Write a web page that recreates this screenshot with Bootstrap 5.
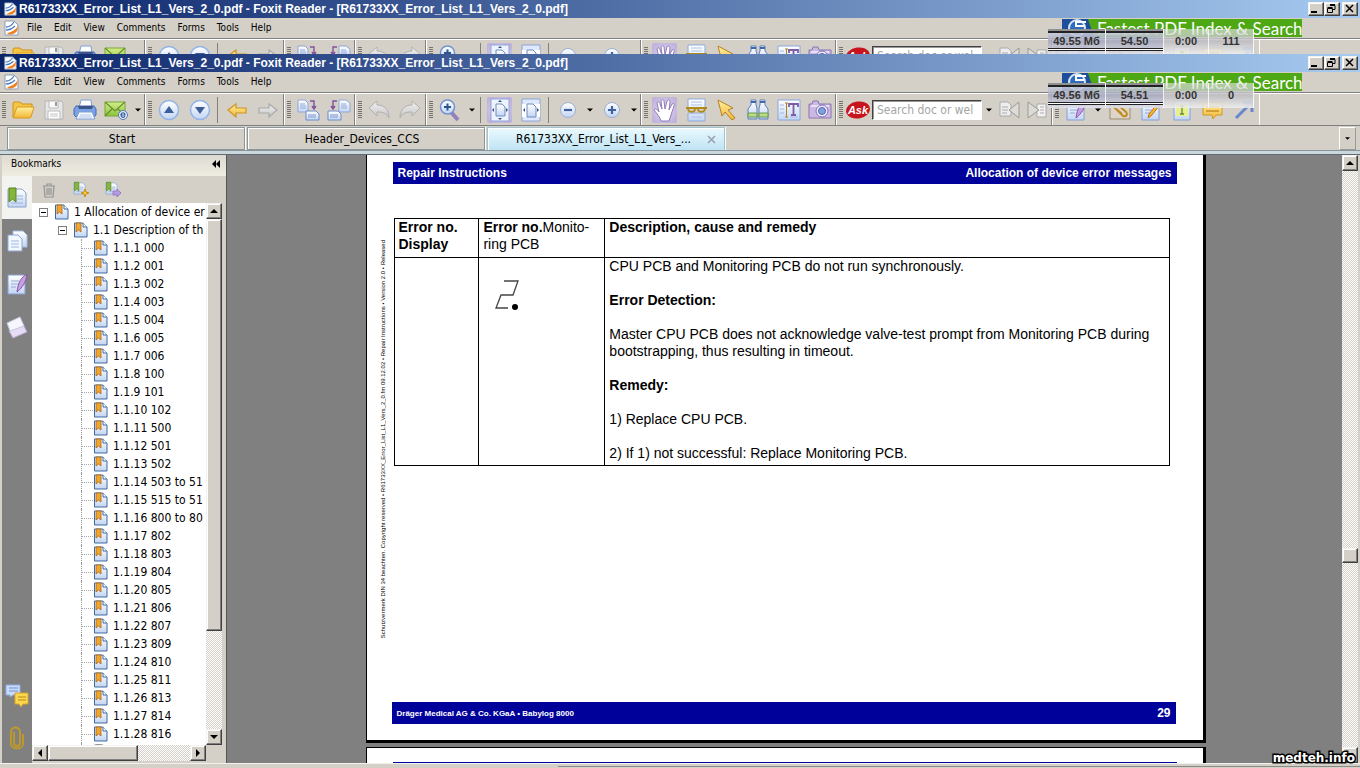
<!DOCTYPE html>
<html lang="en">
<head>
<meta charset="utf-8">
<meta name="viewport" content="width=device-width, initial-scale=1">
<title>R61733XX_Error_List_L1_Vers_2_0.pdf - Foxit Reader</title>
<link href="https://cdn.jsdelivr.net/npm/bootstrap@5.3.0/dist/css/bootstrap.min.css" rel="stylesheet">
<style>
:root{--face:#d4d0c8;--shade:#808080;--navy:#00009a}
body{font:12px/18px "DejaVu Sans Condensed",sans-serif;color:#000;background:var(--face)}
a,a:hover{color:#000;text-decoration:none}
button{font:inherit;color:#000;padding:0;border:0;background:none}
svg{display:block;flex:none}
.checker{background:repeating-conic-gradient(#fff 0 25%,var(--face) 0 50%) 0 0/2px 2px}
.bevel{background:var(--face);border:1px solid;border-color:#f4f2ee #404040 #404040 #f4f2ee;box-shadow:inset -1px -1px var(--shade),inset 1px 1px #fff}

/* window chrome */
.behind{height:54px}
.title-bar{height:18px;padding:0 2px 0 3px;background:linear-gradient(90deg,#0a246a,#a6caf0);color:#fff;font:bold 12px/18px "Liberation Sans",sans-serif}
.title-bar svg:first-child{margin-right:2px}
.win-btn{width:16px;height:14px}
.win-btn svg{margin:0}
.win-gap{margin-right:2px}
.menu-row{height:21px;padding:0 58px 0 3px;border-bottom:1px solid var(--shade);font-size:10px}
.promo{width:240px;height:18px;background:#4da814;color:#fff;font:17px/17px Lato,sans-serif}
.promo svg{margin-right:3px}
.tool-row{height:33px;border-top:1px solid #fff;border-bottom:1px solid var(--shade)}
.tool-group{border-right:1px solid var(--shade);box-shadow:1px 0 #fff;margin-right:1px}
.tool-group:last-child{border-right-color:#fff;box-shadow:none}
.grip{width:4px;height:18px;margin:0 1px 0 2px;background:repeating-linear-gradient(#77736c 0 1px,transparent 1px 2px)}
.tool{width:31px;height:28px}
.tool svg{width:24px;height:24px}
.tool.slim{width:28px}
.tool.on{background:radial-gradient(#e3d8f2,#b9abd8);width:25px;height:26px;margin:0 3px;border-radius:2px}
.drop{width:13px;height:28px}
.rule{width:1px;height:26px;margin:0 3px 0 2px;background:var(--shade)}
.ask-logo{margin:0 2px}
.ask-box{width:110px;height:20px;padding:0 4px;border:1px solid;border-color:#404040 #fff #fff #404040;box-shadow:inset 1px 1px #999;font:12px/18px "DejaVu Sans Condensed",sans-serif;background:#fff;border-radius:0}
.ask-box::placeholder{color:#a5a5a5;opacity:1}
.meter{top:29px;right:106px;height:25px;z-index:2;font:bold 11px/24px "Liberation Sans",sans-serif;color:#333}
.meter span{width:45px;text-align:center;background:linear-gradient(rgba(235,235,235,.6),rgba(190,190,195,.9),rgba(240,240,240,.85));border-right:1px solid rgba(255,255,255,.8)}
.meter .level{width:58px;background:linear-gradient(rgba(215,218,230,.9),rgba(165,168,190,.85),rgba(225,225,235,.9));box-shadow:inset 0 2px rgba(255,255,255,.5),inset 0 4px #222}
.meter .level::after{content:"";display:block;height:3px;margin:-5px 0 0;border:solid #222;border-width:1px 0;background:#fff}

/* document tabs */
.tab-row{height:24px;padding:1px 4px 0 7px}
.doc-tab{width:238px;height:23px;margin-right:2px;padding-right:8px;border:1px solid #8a9698;box-shadow:inset 1px 1px #fff,1px 0 #fff}
.doc-tab.live{background:linear-gradient(#eaf9fd,#bfe4f4);border-color:#9fc3d2;border-bottom:0}
.tab-menu{width:17px;border:1px solid;border-color:#fff #999 #999 #fff}
.tab-base{height:5px;border-top:1px solid #87959f;border-bottom:1px solid #5e6b76;background:#ccd7dc}

/* bookmarks panel */
.side{width:227px;border-right:1px solid #555;padding-left:2px}
.side-head{height:21px;padding:0 6px 3px 9px;background:linear-gradient(#dddad2,#efece2);font-size:10px}
.strip{width:30px;background:var(--shade)}
.strip button{height:43px;width:30px;flex:none}
.strip .live{background:#f3f3f1}
.side-body{padding-bottom:2px}
.side-tools{height:27px;padding-left:9px}
.tree{background:#fff}
.node{height:18px;line-height:18px;white-space:nowrap;flex:none}
.node-a{padding-left:7px}
.node-b{padding-left:26px}
.twig{width:12px;height:18px;flex:none;margin-left:49px;border-left:1px dotted #999;background:repeating-linear-gradient(90deg,#aaa 0 1px,transparent 1px 2px) 0 9px/100% 1px no-repeat}
.fold{width:9px;height:9px;flex:none;margin-right:6px;border:1px solid #808080;background:linear-gradient(#000,#000) center/5px 1px no-repeat #fff}
.v-bar{width:16px}.h-bar{height:16px}
.v-bar button{width:16px;height:16px;flex:none}
.h-bar button{width:16px;height:16px;flex:none}

/* page view */
.canvas{background:var(--shade);padding-left:2px}
.edge{width:2px}
.sheet{width:100%;max-width:840px;background:#fff;border-left:1px solid #000;border-right:3px solid #000;border-bottom:3px solid #000;flex:none;font:14px/17px "Liberation Sans",sans-serif}
.sheet-full{height:588px}
.sheet-next{height:30px;margin-top:4px;padding-top:7px;border-top:1px solid #000}
.band{height:22px;background:var(--navy);color:#fff;font-weight:bold;padding:0 5px}
.band-top{margin:7px 26px 0;font-size:12px}
.band-end{margin:0 27px 16px 25px}
.band-end .owner{font-size:8px}
.band-end .folio{font-size:12px}
.notice{width:27px;padding:24px 7px 0 12px;font-size:6px;line-height:8px}
.notice span{writing-mode:vertical-rl;transform:rotate(180deg);white-space:nowrap}
.faults{margin:34px 33px 0 0;border-collapse:collapse;height:248px}
.faults th,.faults td{border:1px solid #000;padding:0 3px 3px 4px;vertical-align:top}
.faults th{padding-bottom:4px}
.digit{margin:22px 0 0 12px}
.status{height:5px;border-top:1px solid #f4f2ee}
.status div{border-top:1px solid #8a8a86;margin-top:2px}
.watermark{right:5px;bottom:1px;z-index:3;font:bold 12px/18px "DejaVu Sans",sans-serif;color:#fff;-webkit-text-stroke:3px #000;paint-order:stroke fill}
</style>
</head>
<body class="vh-100 overflow-hidden d-flex flex-column">

<svg width="0" height="0" class="position-absolute" aria-hidden="true">
<defs>
<linearGradient id="gy" x2="0" y2="1"><stop stop-color="#fff0a0"/><stop offset="1" stop-color="#f2b632"/></linearGradient>
<linearGradient id="gb" x2="0" y2="1"><stop stop-color="#fff"/><stop offset="1" stop-color="#c3d5f3"/></linearGradient>
<linearGradient id="gg" x2="0" y2="1"><stop stop-color="#d3ee8c"/><stop offset="1" stop-color="#8cc23c"/></linearGradient>
<linearGradient id="gr" x2="0" y2="1"><stop stop-color="#f2f2f2"/><stop offset="1" stop-color="#c4c4c4"/></linearGradient>
<symbol id="app" viewBox="0 0 16 16"><path d="M2 1h9l4 4v10H2z" fill="#fff" stroke="#8aa0b8"/><path d="M3 7c4 0 6-2 8-5M3 10c5 0 7-2 9-4" fill="none" stroke="#4a7cc4" stroke-width="1.3"/><path d="M4 14c3-3 6-1 11-8l-1 5c-2 3-6 4-10 3z" fill="#f08020"/></symbol>
<symbol id="open" viewBox="0 0 24 24"><path d="M2 19V5l1-1h6l2 2h10v3" fill="#f5c545" stroke="#cf9118"/><path d="M2 20L6 9h17l-3 10-1 1z" fill="url(#gy)" stroke="#d89a1c"/></symbol>
<symbol id="save" viewBox="0 0 24 24"><path d="M3 3h16l2 2v16H3z" fill="#e6e6e6" stroke="#b4b4b4"/><path d="M7 3h9v7H7z" fill="#fafafa" stroke="#bbb"/><path d="M13 4h2v4h-2z" fill="#999"/><path d="M6 13h12v8H6z" fill="#fff" stroke="#bbb"/><path d="M8 16h8M8 18h8" stroke="#c4c4c4"/></symbol>
<symbol id="print" viewBox="0 0 24 24"><path d="M6 10L8 2h10l1 8z" fill="#fff" stroke="#7f9fd8"/><path d="M3 8h18l2 3v6l-2 2H3l-2-2v-6z" fill="#7ba0e4" stroke="#4668ae"/><path d="M5 8h15l-1 3H6z" fill="#3c5488"/><path d="M6 14h13l3 7H3z" fill="#f7faff" stroke="#7f9fd8"/><path d="M7 17h11M6 19h13" stroke="#afc4e8"/></symbol>
<symbol id="mail" viewBox="0 0 24 24"><path d="M1 4h20v14H1z" fill="url(#gg)" stroke="#78a834"/><path d="M1 4l10 9 10-9M1 18l7-7M21 18l-7-7" fill="none" stroke="#668f2c" stroke-width="1.2"/><circle cx="19" cy="17" r="4.5" fill="#e6efff" stroke="#5679b8"/><path d="M17 17h4c0-3-4-3-4 0s3 3 4 1" fill="none" stroke="#355a9c" stroke-width="1.2"/></symbol>
<symbol id="up" viewBox="0 0 24 24"><circle cx="12" cy="12" r="9.5" fill="url(#gb)" stroke="#91b3e8" stroke-width="1.5"/><path d="M12 8l5 7H7z" fill="#3c5f99"/></symbol>
<symbol id="down" viewBox="0 0 24 24"><circle cx="12" cy="12" r="9.5" fill="url(#gb)" stroke="#91b3e8" stroke-width="1.5"/><path d="M12 16l5-7H7z" fill="#3c5f99"/></symbol>
<symbol id="left" viewBox="0 0 24 24"><path d="M3 12l8-6v4h10v5H11v4z" fill="url(#gy)" stroke="#cf9624" stroke-width="1.2"/></symbol>
<symbol id="right" viewBox="0 0 24 24"><path d="M21 12l-8-6v4H3v5h10v4z" fill="url(#gr)" stroke="#aaa" stroke-width="1.2"/></symbol>
<symbol id="rotA" viewBox="0 0 24 24"><path d="M2 2h7l3 3v9H2z" fill="url(#gb)" stroke="#8fa6d6"/><path d="M4 6h5M4 8h6M4 10h6" stroke="#93abd8"/><path d="M14 3h4v7M16 8l2 3 2-3" fill="none" stroke="#8350a0" stroke-width="1.4"/><path d="M10 13h10l3 3v6H10z" fill="url(#gb)" stroke="#6f8cc8"/><path d="M13 16v4M15 16v4M17 16v4M19 16v4" stroke="#7d97cd"/></symbol>
<symbol id="rotB" viewBox="0 0 24 24"><path d="M12 2h7l4 3v9H12z" fill="url(#gb)" stroke="#8fa6d6"/><path d="M14 6h5M14 8h6M14 10h6" stroke="#93abd8"/><path d="M10 3H6v7M4 8l2 3 2-3" fill="none" stroke="#8350a0" stroke-width="1.4"/><path d="M1 13h10l3 3v6H1z" fill="url(#gb)" stroke="#6f8cc8"/><path d="M4 16v4M6 16v4M8 16v4M10 16v4" stroke="#7d97cd"/></symbol>
<symbol id="undo" viewBox="0 0 24 24"><path d="M2 10l8-7v4c8 0 12 5 12 13-3-5-6-6-12-6v4z" fill="url(#gr)" stroke="#b0b0b0"/></symbol>
<symbol id="redo" viewBox="0 0 24 24"><path d="M22 10l-8-7v4C6 7 2 12 2 20c3-5 6-6 12-6v4z" fill="url(#gr)" stroke="#b0b0b0"/></symbol>
<symbol id="zoom" viewBox="0 0 24 24"><path d="M13 14l7 8" stroke="#9580b8" stroke-width="4"/><circle cx="9.500" cy="9" r="7" fill="url(#gb)" stroke="#7293cf" stroke-width="1.5"/><path d="M6 9h7M9.500 5.500v7" stroke="#2b5592" stroke-width="2"/></symbol>
<symbol id="fit" viewBox="0 0 24 24"><path d="M3 1h18v22H3z" fill="#eef4ff" stroke="#8ca5d6"/><path d="M8 6h6l3 3v9H8z" fill="url(#gb)" stroke="#6d8ac4"/><path d="M12 2l2 2h-4zM12 22l2-2h-4zM4 12l2-2v4zM20 12l-2-2v4z" fill="#3c5080"/></symbol>
<symbol id="fitw" viewBox="0 0 24 24"><path d="M3 1h18v22H3z" fill="#dfe9fb" stroke="#8ca5d6"/><path d="M3 6h18v13H3z" fill="#fff"/><path d="M8 6h6l3 3v10H8z" fill="url(#gb)" stroke="#6d8ac4"/><path d="M4 12l2-2v4zM20 12l-2-2v4z" fill="#3c5080"/></symbol>
<symbol id="minus" viewBox="0 0 24 24"><circle cx="12" cy="12" r="7.500" fill="url(#gb)" stroke="#9caed0"/><path d="M8 12h8" stroke="#3f62a0" stroke-width="2.200"/></symbol>
<symbol id="plus" viewBox="0 0 24 24"><circle cx="12" cy="12" r="7.500" fill="url(#gb)" stroke="#9caed0"/><path d="M8 12h8M12 8v8" stroke="#3f62a0" stroke-width="2.200"/></symbol>
<symbol id="hand" viewBox="0 0 24 24"><path d="M8 23c-1-4-4-7-7-11 1-2 3-1 5 2L4 5c1-2 3-1 3 1l2 5-1-8c1-2 3-1 3 0l1 8 2-8c1-2 3-1 3 1l-1 8 3-6c2-1 3 0 2 2l-3 9-2 6z" fill="#fff" stroke="#8e7bb8"/></symbol>
<symbol id="read" viewBox="0 0 24 24"><path d="M4 1h17v9H4zM4 15h17v8H4z" fill="url(#gb)" stroke="#8fa9dc"/><path d="M7 4h11M7 7h11M7 19h11" stroke="#b3c5e6"/><path d="M2 10h21M4 10c0 5 7 5 7 1M14 11c0 4 7 4 7-1" fill="none" stroke="#b28a18" stroke-width="1.800"/></symbol>
<symbol id="arrow" viewBox="0 0 24 24"><path d="M3 2l15 8-5 2 7 8-3 2-7-8-3 4z" fill="url(#gy)" stroke="#b58126"/></symbol>
<symbol id="find" viewBox="0 0 24 24"><path d="M5 2h5v5l1 3v11H2V11l3-4zM14 2h5v5l3 4v10h-9V10l1-3z" fill="url(#gb)" stroke="#5b7fc0"/><path d="M2 15h9v4H2zM13 15h9v4h-9z" fill="#b9dc84" stroke="#6e9a54"/><path d="M5 4h5M14 4h5" stroke="#3e67ac" stroke-width="2"/></symbol>
<symbol id="text" viewBox="0 0 24 24"><path d="M1 2h22v20H1z" fill="url(#gb)" stroke="#8ba6dd"/><path d="M3 7h4M3 11h4M3 15h4M13 19h8" stroke="#a5bbe3"/><path d="M8 5h3M8 19h3M9.500 5v14" stroke="#b18222"/><path d="M12 9V6h9v3M16.500 6v11M14 17h5" fill="none" stroke="#7d5ca8" stroke-width="1.800"/></symbol>
<symbol id="camera" viewBox="0 0 24 24"><path d="M1 6h3l1-3h5l1 3h12v14H1z" fill="#cbb9e4" stroke="#8b74b4"/><path d="M3 8h18" stroke="#e9e0f6" stroke-width="2"/><circle cx="14" cy="13" r="6" fill="#eee8fa" stroke="#7f72b6"/><circle cx="14" cy="13" r="3.500" fill="#7fa1e0" stroke="#5268a8"/></symbol>
<symbol id="prev" viewBox="0 0 24 24"><path d="M3 4h8l3 3v11H3z" fill="#eee" stroke="#aaa"/><path d="M5 9h6M5 12h6M5 15h5" stroke="#aaa"/><path d="M22 4v16l-10-8z" fill="#dedbd5" stroke="#999"/></symbol>
<symbol id="next" viewBox="0 0 24 24"><path d="M12 6h9v13h-9z" fill="#f2f2f2" stroke="#aaa"/><path d="M15 9h4M15 12h4M15 15h4" stroke="#aaa"/><path d="M3 4v16l11-8z" fill="#dedbd5" stroke="#999"/></symbol>
<symbol id="note" viewBox="0 0 24 24"><path d="M3 3h17v19H3z" fill="url(#gb)" stroke="#86a0d4"/><path d="M6 9h8M6 12h7M6 15h5" stroke="#93a9d6"/><path d="M22 2c-6 3-9 9-10 18 6-5 9-10 10-18z" fill="#c6a0e2" stroke="#8656a8"/></symbol>
<symbol id="attach" viewBox="0 0 24 24"><path d="M2 3h20v18H2z" fill="#dcd5c8" stroke="#9b8c6c"/><path d="M6 9l9 9c3 1 5-1 3-4L9 6C7 5 5 7 6 9l8 7" fill="none" stroke="#c48a20" stroke-width="2"/></symbol>
<symbol id="edit" viewBox="0 0 24 24"><path d="M3 3h17v19H3z" fill="url(#gb)" stroke="#86a0d4"/><path d="M6 9h8M6 12h7M6 15h5" stroke="#93a9d6"/><path d="M21 7l-9 11-3 2 1-4 9-11z" fill="#f6b42c" stroke="#b97a20"/></symbol>
<symbol id="type" viewBox="0 0 24 24"><path d="M4 3h16v19H4z" fill="url(#gb)" stroke="#86a0d4"/><path d="M6 6h12v12H6z" fill="#e6f08c"/><path d="M10 8h4M12 8v8M10 16h4" stroke="#6a8a30" stroke-width="1.300"/></symbol>
<symbol id="bubble" viewBox="0 0 24 24"><path d="M2 4h19v13h-6l-3 4-1-4H2z" fill="url(#gy)" stroke="#d0982c"/><path d="M5 9h13M5 13h13" stroke="#c48e24" stroke-width="1.500"/></symbol>
<symbol id="pointer" viewBox="0 0 24 24"><path d="M4 20L17 7" stroke="#6788cc" stroke-width="3"/><path d="M11 5l9-1v10" fill="none" stroke="#6788cc" stroke-width="3"/></symbol>
<symbol id="mark" viewBox="0 0 16 16"><path d="M1.500 1h8.500l4 4v10H1.500z" fill="url(#gb)" stroke="#3f6aa0"/><path d="M10 1v4h4" fill="#fff" stroke="#3f6aa0"/><path d="M3 1h5v9L5.500 8 3 10z" fill="#f0a630" stroke="#a86414" stroke-width=".8"/></symbol>
<symbol id="pgmark" viewBox="0 0 24 24"><path d="M3 3h14l4 4v14H3z" fill="url(#gb)" stroke="#88a2c8"/><path d="M12 10h6M12 13h6M6 17h12" stroke="#9db3d8" stroke-width="1.200"/><path d="M4 2h7v14l-3.500-3L4 16z" fill="#85b63c" stroke="#55831e"/></symbol>
<symbol id="bin" viewBox="0 0 16 16"><path d="M2 4h12M6 4V2h4v2M3 4l1 11h8l1-11M6 6v7M8 6v7M10 6v7" fill="none" stroke="#949494" stroke-width="1.200"/></symbol>
<symbol id="pages" viewBox="0 0 24 24"><path d="M8 2h10l4 4v12H8z" fill="url(#gb)" stroke="#a7bde2"/><path d="M3 6h10l4 4v12H3z" fill="#f3f8ff" stroke="#8fa9d4"/><path d="M6 12h8M6 15h8M6 18h8" stroke="#9db5e2"/></symbol>
<symbol id="layers" viewBox="0 0 24 24"><path d="M4 16l14-7 4 8-14 6z" fill="#e6dcf4" stroke="#b7a5d2"/><path d="M2 8l13-6 4 9-14 5z" fill="#f6f6fc" stroke="#c3c6dc"/></symbol>
<symbol id="talk" viewBox="0 0 24 24"><path d="M1 2h14v10H8l-3 2v-2H1z" fill="#cadcfb" stroke="#8daade"/><path d="M4 5h9M4 8h9" stroke="#6d8fd0"/><path d="M10 10h13v11h-5l-2 3-2-3h-4z" fill="#fbd84c" stroke="#d9a328"/><path d="M13 14h8M13 17h8" stroke="#b98618"/></symbol>
<symbol id="clip" viewBox="0 0 24 24"><path d="M9 6v11c0 4 6 4 6 0V6c0-6-9-6-9 0v12c0 6 12 6 12 0V8" fill="none" stroke="#c39b24" stroke-width="1.800"/></symbol>
<symbol id="tN" viewBox="0 0 8 8"><path d="M0 6l4-4 4 4z"/></symbol>
<symbol id="tS" viewBox="0 0 8 8"><path d="M0 2l4 4 4-4z"/></symbol>
<symbol id="tW" viewBox="0 0 8 8"><path d="M6 0L2 4l4 4z"/></symbol>
<symbol id="tE" viewBox="0 0 8 8"><path d="M2 0l4 4-4 4z"/></symbol>
</defs>
</svg>

<div id="windows" class="flex-shrink-0"></div>

<template id="chrome">
  <header class="position-relative overflow-hidden">
    <div class="title-bar d-flex align-items-center">
      <svg width="14" height="14"><use href="#app"/></svg>
      <span class="me-auto text-nowrap">R61733XX_Error_List_L1_Vers_2_0.pdf - Foxit Reader - [R61733XX_Error_List_L1_Vers_2_0.pdf]</span>
      <button class="bevel win-btn" aria-label="Minimize"><svg width="12" height="10"><path d="M2 8h6" stroke="#000" stroke-width="2"/></svg></button>
      <button class="bevel win-btn win-gap" aria-label="Restore"><svg width="13" height="12"><path d="M5 2.500h5v4H8M2.500 5.500h5v4h-5zM5 1.500h5M2.500 4.500h5" fill="none" stroke="#000"/></svg></button>
      <button class="bevel win-btn" aria-label="Close"><svg width="13" height="12"><path d="M3 2l7 7M10 2L3 9" stroke="#000" stroke-width="1.500"/></svg></button>
    </div>
    <nav class="menu-row d-flex align-items-center">
      <svg width="16" height="16" class="me-2"><use href="#app"/></svg>
      <div class="d-flex me-auto menu-items"></div>
      <div class="promo d-flex align-items-center">
        <svg width="32" height="18"><path d="M0 0h26l6 18H0z" fill="#1d4f9c"/><circle cx="15" cy="9" r="8" fill="#2f6cc0" stroke="#d9e6f8" stroke-width="2"/><path d="M24 3H14v4h8M14 11h6" fill="none" stroke="#fff" stroke-width="2"/></svg>
        <span class="text-nowrap">Fastest PDF Index &amp; Search</span>
      </div>
    </nav>
    <div class="tool-row d-flex"></div>
    <div class="meter position-absolute d-flex"></div>
  </header>
</template>

<nav class="tab-row d-flex flex-shrink-0">
  <a href="#" class="doc-tab d-flex align-items-center justify-content-center">Start</a>
  <a href="#" class="doc-tab d-flex align-items-center justify-content-center">Header_Devices_CCS</a>
  <a href="#" class="doc-tab live d-flex align-items-center justify-content-end">
    <span>R61733XX_Error_List_L1_Vers_...</span>
    <svg width="9" height="9" class="ms-3"><path d="M1 1l7 7M8 1L1 8" stroke="#9a9fb0" stroke-width="1.500"/></svg>
  </a>
  <button class="tab-menu ms-auto d-flex align-items-center justify-content-center" aria-label="Tab list"><svg width="5" height="5"><use href="#tS"/></svg></button>
</nav>
<div class="tab-base flex-shrink-0"></div>

<div class="d-flex flex-fill overflow-hidden">
  <aside class="side d-flex flex-column flex-shrink-0">
    <div class="side-head d-flex align-items-center justify-content-between">
      <span>Bookmarks</span>
      <button aria-label="Collapse panel"><svg width="8" height="8"><path d="M4 0v8L0 4zM8 0v8L4 4z"/></svg></button>
    </div>
    <div class="d-flex flex-fill overflow-hidden">
      <div class="strip d-flex flex-column">
        <button class="live d-flex align-items-center justify-content-center" aria-label="Bookmarks"><svg width="24" height="24"><use href="#pgmark"/></svg></button>
        <button class="d-flex align-items-center justify-content-center" aria-label="Pages"><svg width="24" height="24"><use href="#pages"/></svg></button>
        <button class="d-flex align-items-center justify-content-center" aria-label="Signatures"><svg width="24" height="24"><use href="#note"/></svg></button>
        <button class="d-flex align-items-center justify-content-center" aria-label="Layers"><svg width="24" height="24"><use href="#layers"/></svg></button>
        <button class="mt-auto d-flex align-items-center justify-content-center" aria-label="Comments"><svg width="24" height="24"><use href="#talk"/></svg></button>
        <button class="mb-1 d-flex align-items-center justify-content-center" aria-label="Attachments"><svg width="24" height="24"><use href="#clip"/></svg></button>
      </div>
      <div class="side-body d-flex flex-column flex-fill overflow-hidden me-1">
        <div class="side-tools d-flex align-items-center gap-3 flex-shrink-0">
          <button aria-label="Delete"><svg width="16" height="16"><use href="#bin"/></svg></button>
          <button aria-label="Add bookmark"><svg width="16" height="18" viewBox="0 0 16 18"><use href="#pgmark" x="-1" y="0" width="15" height="15"/><path d="M12 8l1 3 3 1-3 1-1 3-1-3-3-1 3-1z" fill="#f7ce3c" stroke="#c98f14"/></svg></button>
          <button aria-label="Expand bookmark"><svg width="16" height="18" viewBox="0 0 16 18"><use href="#pgmark" x="-1" y="0" width="15" height="15"/><path d="M8 10h4V8l4 4-4 4v-2H8z" fill="#b69adf" stroke="#8f70c0" stroke-width=".8"/></svg></button>
        </div>
        <div class="d-flex flex-fill overflow-hidden">
          <div id="tree" class="tree flex-fill overflow-hidden d-flex flex-column"></div>
          <div class="v-bar checker d-flex flex-column flex-shrink-0">
            <button class="bevel d-flex align-items-center justify-content-center" aria-label="Scroll up"><svg width="8" height="8"><use href="#tN"/></svg></button>
            <div class="bevel" style="height:76%"></div>
            <button class="bevel mt-auto d-flex align-items-center justify-content-center" aria-label="Scroll down"><svg width="8" height="8"><use href="#tS"/></svg></button>
          </div>
        </div>
        <div class="h-bar d-flex flex-shrink-0 me-3">
          <div class="checker d-flex flex-fill">
          <button class="bevel d-flex align-items-center justify-content-center" aria-label="Scroll left"><svg width="8" height="8"><use href="#tW"/></svg></button>
          <div class="bevel" style="width:52%"></div>
          <button class="bevel ms-auto d-flex align-items-center justify-content-center" aria-label="Scroll right"><svg width="8" height="8"><use href="#tE"/></svg></button>
          </div>
        </div>
      </div>
    </div>
  </aside>

  <main class="canvas flex-fill overflow-hidden d-flex flex-column align-items-center">
    <article class="sheet sheet-full d-flex flex-column">
      <div class="band band-top d-flex align-items-center justify-content-between"><span>Repair Instructions</span><span>Allocation of device error messages</span></div>
      <div class="d-flex">
        <div class="notice mt-5 pt-2 flex-shrink-0"><span class="d-block">Schutzvermerk DIN 34 beachten. Copyright reserved • R61733XX_Error_List_L1_Vers_2_0.fm 09.12.02 • Repair Instructions • Version 2.0 • Released</span></div>
        <div class="flex-fill">
        <table class="faults">
          <colgroup><col style="width:85px"><col style="width:126px"><col style="width:565px"></colgroup>
          <thead><tr><th scope="col">Error no.<br>Display</th><th scope="col">Error no.<span class="fw-normal">Monito-<br>ring PCB</span></th><th scope="col">Description, cause and remedy</th></tr></thead>
          <tbody><tr><td></td>
            <td><svg width="24" height="31" class="digit" viewBox="0 0 24 31" aria-label="2."><path d="M9 1h14l-5 14H6L1 28h12" fill="none" stroke="#444" stroke-width="1.300"/><circle cx="20" cy="27" r="3"/></svg></td>
            <td>CPU PCB and Monitoring PCB do not run synchronously.<br><br><b>Error Detection:</b><br><br>Master CPU PCB does not acknowledge valve-test prompt from Monitoring PCB during<br>bootstrapping, thus resulting in timeout.<br><br><b>Remedy:</b><br><br>1) Replace CPU PCB.<br><br>2) If 1) not successful: Replace Monitoring PCB.</td></tr></tbody>
        </table>
        </div>
      </div>
      <div class="band band-end mt-auto d-flex align-items-center justify-content-between"><span class="owner">Dräger Medical AG &amp; Co. KGaA • Babylog 8000</span><span class="folio">29</span></div>
    </article>
    <div class="sheet sheet-next"><div class="band band-top"></div></div>
  </main>
  <div class="v-bar checker d-flex flex-column flex-shrink-0">
    <button class="bevel d-flex align-items-center justify-content-center" aria-label="Page up"><svg width="8" height="8"><use href="#tN"/></svg></button>
    <div style="height:62%"></div>
    <div class="bevel" style="height:15px"></div>
    <button class="bevel mt-auto d-flex align-items-center justify-content-center" aria-label="Page down"><svg width="8" height="8"><use href="#tS"/></svg></button>
  </div>
  <div class="edge flex-shrink-0"></div>
</div>
<footer class="status d-flex flex-shrink-0"><div class="border-0" style="width:41%"></div><div class="flex-fill"></div></footer>
<div class="watermark position-absolute">medteh.info</div>

<script>
// Toolbar groups: "|" is a thin rule, "v" a drop-down arrow, "ask" the search box;
// a trailing "*" marks a pressed button, a trailing "-" a narrow one
const groups = [
  "open save print mail v", "up down | left right", "rotA rotB", "undo redo",
  "zoom v | fit* fitw | minus v plus v", "hand* read arrow find text camera",
  "ask prev- next-", "note v attach edit type bubble pointer"
];
const drop = '<button class="drop d-flex align-items-center justify-content-center" aria-label="More"><svg width="6" height="6"><use href="#tS"/></svg></button>';
const ask = '<svg width="24" height="20" class="ask-logo" viewBox="0 0 24 20"><ellipse cx="12" cy="10" rx="12" ry="8.500" transform="rotate(-8 12 10)" fill="#c8141c"/><text x="12" y="14" text-anchor="middle" font-family="Liberation Sans" font-size="11" font-weight="bold" font-style="italic" fill="#fff">Ask</text></svg>' +
  '<input class="ask-box" type="text" placeholder="Search doc or wel" aria-label="Search">' + drop;
function item(t){
  if (t === "|") return '<span class="rule"></span>';
  if (t === "v") return drop;
  if (t === "ask") return ask;
  const id = t.replace(/[*-]$/, "");
  const kind = t.endsWith("*") ? "on" : t.endsWith("-") ? "slim" : "";
  return `<button class="tool ${kind} d-flex align-items-center justify-content-center" aria-label="${id}"><svg><use href="#${id}"/></svg></button>`;
}
const readings = [["49.55 Mб","54.50","0:00","111"], ["49.56 Mб","54.51","0:00","0"]];
readings.forEach((r, n) => {
  const w = document.getElementById("chrome").content.cloneNode(true);
  if (n === 0) w.querySelector("header").classList.add("behind");
  w.querySelector(".menu-items").innerHTML = ["File","Edit","View","Comments","Forms","Tools","Help"].map(m => `<a href="#" class="me-2 pe-1">${m}</a>`).join("");
  w.querySelector(".tool-row").innerHTML = groups.map(g => `<div class="tool-group d-flex align-items-center"><span class="grip"></span>${g.split(" ").map(item).join("")}</div>`).join("");
  w.querySelector(".meter").innerHTML = r.map((v, i) => `<span class="${i < 2 ? "level" : ""}">${v}</span>`).join("");
  document.getElementById("windows").append(w);
});
const codes = ["000","001","002","003","004","005","006","100","101","102","500","501","502","503 to 51","515 to 51","800 to 80","802","803","804","805","806","807","809","810","811","813","814","816","817"];
const page = '<svg width="16" height="16" class="me-1"><use href="#mark"/></svg>';
document.getElementById("tree").innerHTML =
  `<div class="node node-a d-flex align-items-center"><button class="fold" aria-label="Collapse"></button>${page}<a href="#">1 Allocation of device er</a></div>` +
  `<div class="node node-b d-flex align-items-center"><button class="fold" aria-label="Collapse"></button>${page}<a href="#">1.1 Description of th</a></div>` +
  codes.map((c, i) => `<div class="node d-flex align-items-center"><span class="twig"></span>${page}<a href="#">1.1.${i + 1} ${c}</a></div>`).join("");
</script>
<script src="https://cdn.jsdelivr.net/npm/bootstrap@5.3.0/dist/js/bootstrap.bundle.min.js"></script>
</body>
</html>
